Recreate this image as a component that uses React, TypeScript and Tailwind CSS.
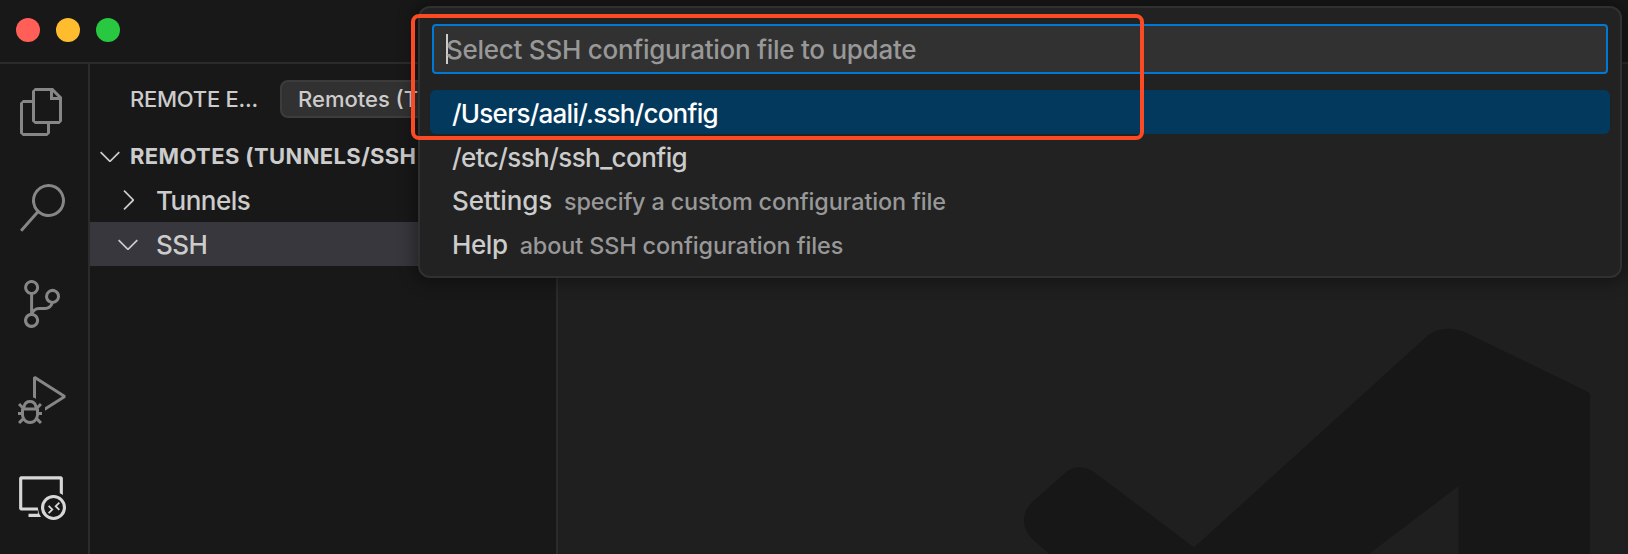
import { VscFiles, VscSearch, VscSourceControl, VscDebugAlt, VscRemoteExplorer, VscChevronDown, VscChevronRight } from "react-icons/vsc";

const activities = [
  { name: "Explorer", Icon: VscFiles, color: "text-[#868686]" },
  { name: "Search", Icon: VscSearch, color: "text-[#868686]" },
  { name: "Source Control", Icon: VscSourceControl, color: "text-[#868686]" },
  { name: "Run and Debug", Icon: VscDebugAlt, color: "text-[#868686]" },
  { name: "Remote Explorer", Icon: VscRemoteExplorer, color: "text-[#d7d7d7]" },
];

function TitleBar() {
  return (
    <header className="flex h-16 shrink-0 items-center gap-4 border-b-2 border-[#2b2b2b] bg-[#181818] px-4 pb-0.5">
      <span className="size-6 rounded-full bg-[#ff5f57]" />
      <span className="size-6 rounded-full bg-[#febc2e]" />
      <span className="size-6 rounded-full bg-[#28c840]" />
    </header>
  );
}

function ActivityBar() {
  return (
    <nav className="flex w-[90px] shrink-0 flex-col gap-12 border-r-2 border-[#2b2b2b] bg-[#181818] pt-6 pl-[18px]">
      {activities.map(({ name, Icon, color }) => (
        <Icon key={name} className={`size-12 shrink-0 ${color}`} />
      ))}
    </nav>
  );
}

function Sidebar() {
  return (
    <aside className="flex w-[468px] shrink-0 flex-col border-r-2 border-[#2b2b2b] bg-[#181818] text-[#cccccc]">
      <div className="flex h-[70px] items-center pl-10 text-[22px]">
        <span className="w-[150px] tracking-[-0.25px] whitespace-nowrap">REMOTE E...</span>
        <span className="flex h-[38px] w-[260px] items-center rounded-lg border-2 border-[#3c3c3c] bg-[#313131] pl-4 whitespace-nowrap">
          Remotes (T
        </span>
      </div>
      <div className="flex h-11 items-center gap-1 pl-1 text-[22px] font-bold whitespace-nowrap">
        <VscChevronDown className="size-8 shrink-0" />
        <span className="tracking-[0.38px]">REMOTES (TUNNELS/SSH</span>
      </div>
      <div className="flex h-11 items-center gap-3 pl-[22px] text-[26px]">
        <VscChevronRight className="size-8 shrink-0" />
        <span className="pt-px tracking-[-0.5px]">Tunnels</span>
      </div>
      <div className="flex h-11 items-center gap-3 bg-[#37373d] pl-[22px] text-[26px]">
        <VscChevronDown className="size-8 shrink-0" />
        <span className="pt-px tracking-[-0.5px]">SSH</span>
      </div>
    </aside>
  );
}

function Editor() {
  return (
    <main className="flex min-w-0 flex-1 justify-end bg-[#1f1f1f] pt-[260px] pr-[38px]">
      <svg className="h-[230px] w-[567px] shrink-0" viewBox="1023 324 567 230">
        <path
          fill="#171717"
          fillRule="evenodd"
          d="M1590 560V394L1587 391.500 1467.500 333.400C1452 325.800 1435 327.500 1424 339L1194 547.500 1096 473.500C1086 465.300 1073 465 1064.500 473.500L1033 501.500C1021 512 1021 529 1033 539.500L1056 560H1361L1458.500 486V560Z"
        />
      </svg>
    </main>
  );
}

function QuickPick() {
  return (
    <div className="absolute top-1.5 left-[418px] flex h-[272px] w-[1204px] flex-col rounded-xl border-2 border-[#303031] bg-[#222222] px-2.5 pt-4 text-[26px] whitespace-nowrap text-[#cccccc] shadow-[0_0_16px_4px_rgba(0,0,0,0.36)]">
      <div className="mx-0.5 flex h-[50px] shrink-0 items-center rounded border-2 border-[#0078d4] bg-[#313131] pl-3 text-[#989898]">
        <span className="h-[30px] w-0.5 bg-[#cccccc]" />
        <span className="-ml-0.5 pt-px tracking-[-0.26px]">Select SSH configuration file to update</span>
      </div>
      <div className="mt-4 flex h-11 items-center rounded-md bg-[#04395e] pl-[22px] text-white">
        <span className="pt-0.5 tracking-[-0.75px]">/Users/aali/.ssh/config</span>
      </div>
      <div className="flex h-11 items-center pl-[22px]">
        <span className="pt-0.5 tracking-[-0.57px]">/etc/ssh/ssh_config</span>
      </div>
      <div className="flex h-11 items-center pl-[22px]">
        <div className="flex items-baseline gap-3 pt-px">
          <span className="tracking-[-0.17px]">Settings</span>
          <span className="text-[23.4px] tracking-[-0.16px] text-[#989898]">specify a custom configuration file</span>
        </div>
      </div>
      <div className="flex h-11 items-center pl-[22px]">
        <div className="flex items-baseline gap-3 pt-px">
          <span className="tracking-[-0.4px]">Help</span>
          <span className="text-[23.4px] tracking-[-0.11px] text-[#989898]">about SSH configuration files</span>
        </div>
      </div>
    </div>
  );
}

export default function App() {
  return (
    <div className="relative flex h-[554px] w-[1628px] flex-col overflow-hidden bg-[#181818] font-['Inter',sans-serif] font-[450]">
      <TitleBar />
      <div className="flex min-h-0 flex-1">
        <ActivityBar />
        <Sidebar />
        <Editor />
      </div>
      <QuickPick />
      <div className="absolute top-3.5 left-[411px] h-[126px] w-[733px] rounded-lg border-4 border-[#fa4b25]" />
    </div>
  );
}
